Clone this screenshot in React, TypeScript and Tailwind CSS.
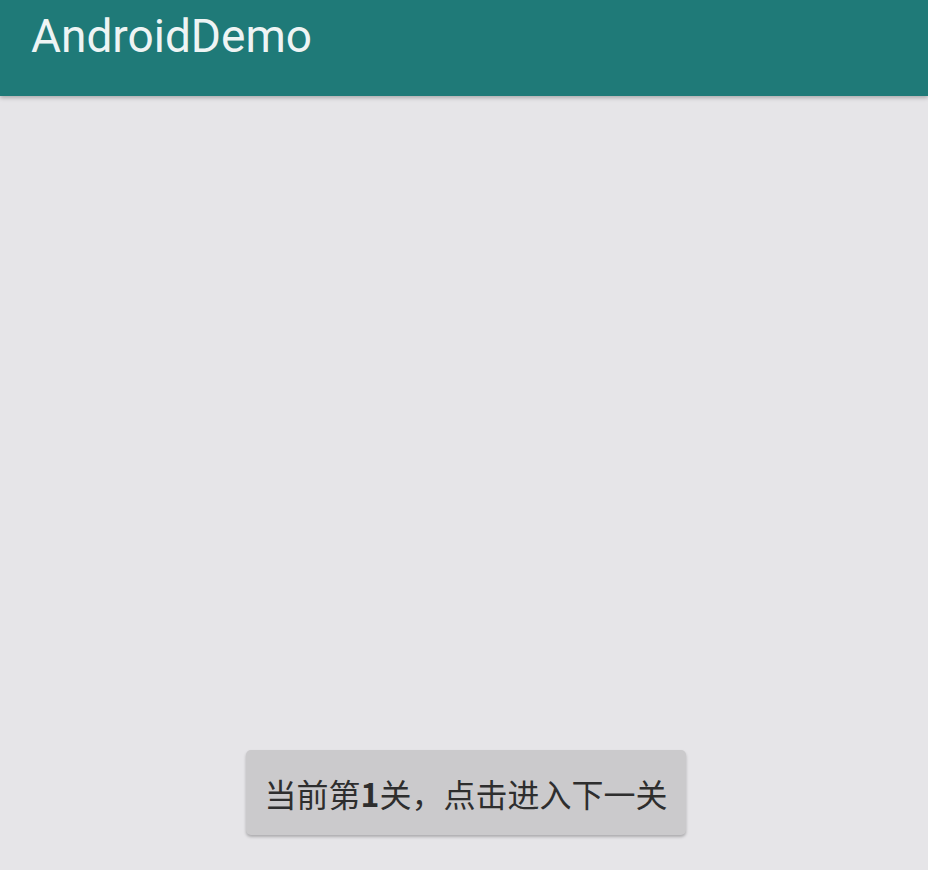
export default function App() {
    return (
        <div className="flex flex-col h-[870px] w-[928px] bg-[#e6e5e8] overflow-hidden">
            <header className="h-[96px] bg-[#1f7a78] flex items-center pl-[31px] shadow-[0_2px_4px_rgba(0,0,0,0.25)] z-10">
                <h1 className="text-[46px] leading-none text-[#eef4f4] font-['Roboto',sans-serif] -mt-[25px]">
                    AndroidDemo
                </h1>
            </header>
            <main className="flex-1 flex flex-col items-center justify-end pb-[35px]">
                <button className="ml-[4px] w-[440px] h-[85px] rounded-[5px] bg-[#cbcacc] text-[#2e2e2e] text-[32px] font-['Noto_Sans_CJK_SC',sans-serif] shadow-[0_2px_3px_rgba(0,0,0,0.25)]">
                    当前第<span className="font-bold">1</span>关，点击进入下一关
                </button>
            </main>
        </div>
    )
}
